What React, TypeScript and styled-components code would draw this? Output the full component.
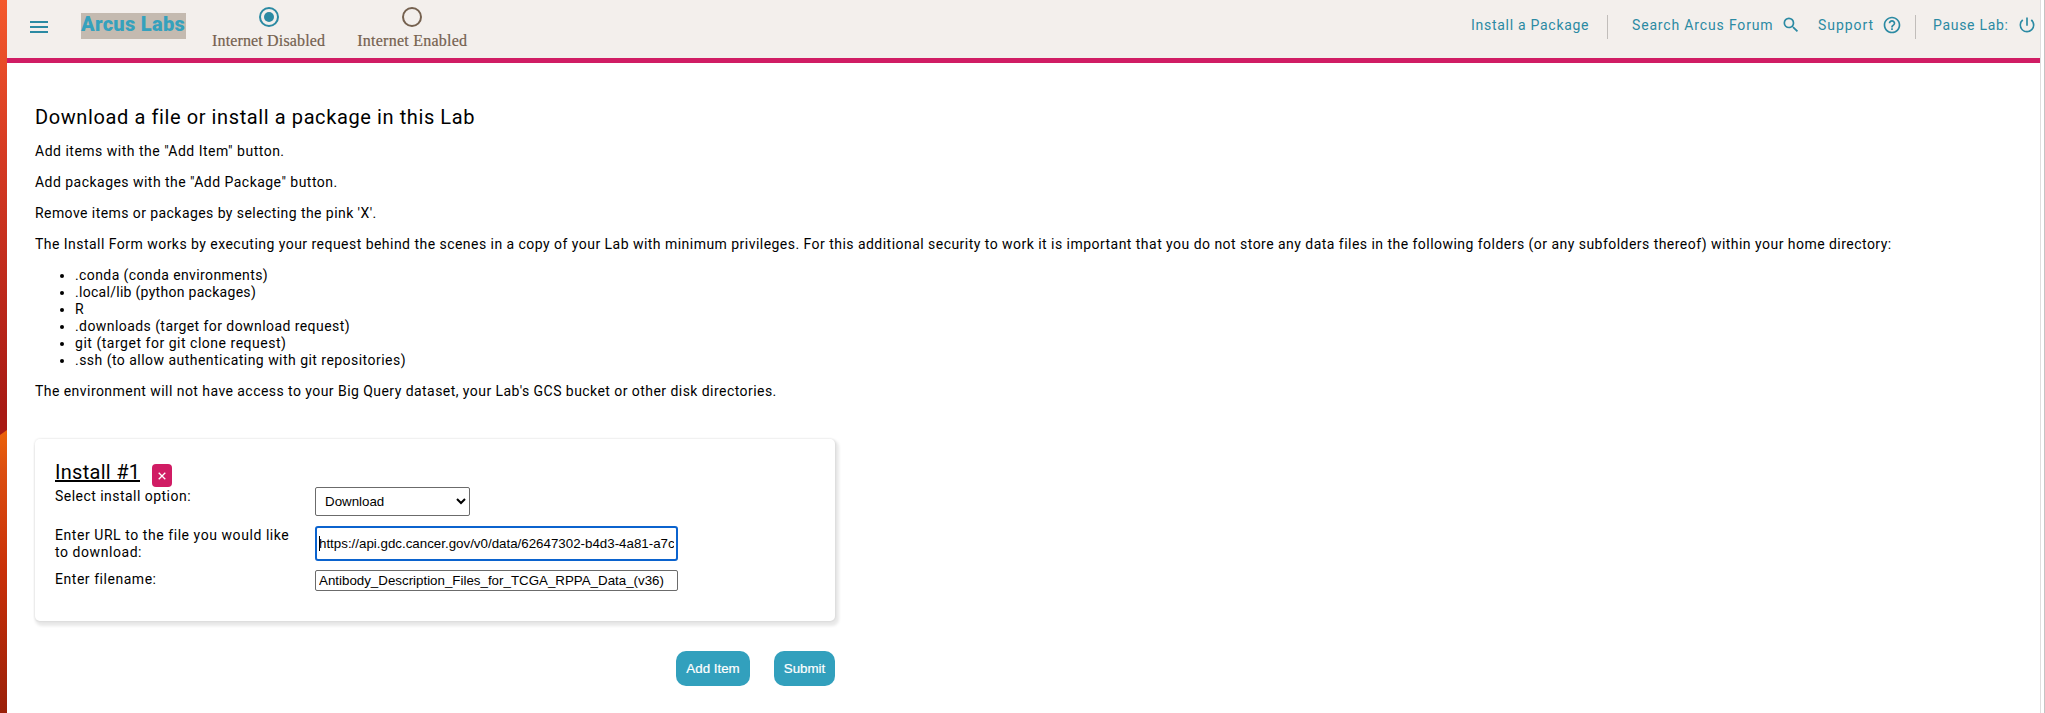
import React from 'react';
import styled, { createGlobalStyle } from 'styled-components';
import { MdHelpOutline, MdPowerSettingsNew, MdSearch } from 'react-icons/md';

const teal = '#2b8aa3';
const pink = '#d01c64';

const GlobalStyle = createGlobalStyle`
  * { box-sizing: border-box; }
  body {
    margin: 0;
    background: #fff;
    color: #000;
    font: 14px/17px Roboto, sans-serif;
  }
`;

const Screen = styled.div`
  display: flex;
  height: 713px;
  overflow: hidden;
`;

const Wallpaper = styled.div`
  flex: 0 0 7px;
  padding-top: 430px;
  background: linear-gradient(180deg, #f4592c 0, #d63b23 150px, #a81a14 410px, #a81a14 440px);
  &::after {
    content: '';
    display: block;
    height: 283px;
    background: linear-gradient(180deg, #ec6208 0, #dc4f10 40px, #c93008 140px, #9a2009 283px);
    clip-path: polygon(0 5px, 100% 0, 100% 100%, 0 100%);
  }
`;

const Page = styled.div`
  flex: 1;
  min-width: 0;
`;

const Gutter = styled.div`
  flex: 0 0 5px;
  background: #fff;
  border-left: 1px solid #dedede;
  border-right: 1px solid #c4c4c4;
`;

const Header = styled.header`
  display: flex;
  height: 63px;
  padding-left: 23px;
  background: #f3efec;
  border-bottom: 5px solid ${pink};
`;

const MenuButton = styled.div`
  display: flex;
  flex-direction: column;
  gap: 3px;
  width: 18px;
  margin: 21px 33px 0 0;
`;

const MenuBar = styled.span`
  height: 2px;
  background: ${teal};
`;

const Logo = styled.div`
  width: 105px;
  height: 26px;
  margin: 13px 26px 0 0;
  background: #c4bab0;
  color: #35a1bd;
  font-size: 20px;
  font-weight: 900;
  line-height: 22px;
  letter-spacing: 0.31px;
  white-space: nowrap;
`;

const RadioOption = styled.div<{ $gap?: number }>`
  display: flex;
  flex-direction: column;
  align-items: center;
  padding-top: 7px;
  margin-right: ${(p) => p.$gap ?? 0}px;
`;

const RadioDot = styled.span<{ $on?: boolean }>`
  display: grid;
  place-items: center;
  width: 20px;
  height: 20px;
  border: 2px solid ${(p) => (p.$on ? teal : '#75614f')};
  border-radius: 50%;
  &::after {
    content: '';
    width: 10px;
    height: 10px;
    border-radius: 50%;
    background: ${(p) => (p.$on ? teal : 'transparent')};
  }
`;

const RadioLabel = styled.span<{ $spacing: number }>`
  margin-top: 5px;
  color: #75614f;
  font: 16px/18px 'Liberation Serif', serif;
  -webkit-text-stroke: 0.2px #75614f;
  letter-spacing: ${(p) => p.$spacing}px;
  white-space: nowrap;
`;

const Nav = styled.nav`
  display: flex;
  margin: 15px 3px 0 auto;
  color: ${teal};
`;

const NavLink = styled.a<{ $w: number; $spacing: number }>`
  width: ${(p) => p.$w}px;
  padding-top: 2px;
  letter-spacing: ${(p) => p.$spacing}px;
  white-space: nowrap;
`;

const NavIcon = styled.span<{ $gap?: number }>`
  width: 20px;
  height: 20px;
  margin-right: ${(p) => p.$gap ?? 0}px;
  svg { display: block; }
`;

const Divider = styled.span<{ $gap: number }>`
  width: 1px;
  height: 24px;
  margin-right: ${(p) => p.$gap}px;
  background: #c1bdba;
`;

const Main = styled.main`
  padding: 42px 28px 0;
`;

const Title = styled.h1`
  margin: 0 0 14px;
  font-size: 20px;
  font-weight: 400;
  line-height: 24px;
  letter-spacing: 0.6px;
`;

const Text = styled.p<{ $spacing: number }>`
  margin: 0 0 14px;
  letter-spacing: ${(p) => p.$spacing}px;
  white-space: nowrap;
`;

const Folders = styled.ul`
  margin: 0 0 14px;
  padding-left: 40px;
`;

const Folder = styled.li<{ $spacing: number }>`
  letter-spacing: ${(p) => p.$spacing}px;
`;

const Card = styled.section`
  width: 800px;
  height: 182px;
  margin-top: 39px;
  padding: 24px 20px 0;
  border-radius: 5px;
  box-shadow:
    2px 3px 3px 2px rgba(0, 0, 0, 0.09),
    0 0 2px 1px rgba(0, 0, 0, 0.06);
`;

const CardHead = styled.div`
  display: flex;
  height: 24px;
`;

const CardTitle = styled.h2`
  margin: -5px 12px 0 0;
  width: 85px;
  height: 24px;
  padding-top: 2px;
  border-bottom: 2px solid #000;
  font-size: 20px;
  font-weight: 400;
  line-height: 24px;
  letter-spacing: 0.28px;
  white-space: nowrap;
`;

const RemoveButton = styled.button`
  display: grid;
  place-items: center;
  width: 20px;
  height: 23px;
  margin-top: 1px;
  padding: 0;
  border: 0;
  border-radius: 4px;
  background: ${pink};
`;

const Row = styled.div<{ $h: number }>`
  display: grid;
  grid-template-columns: 260px 363px;
  height: ${(p) => p.$h}px;
  margin-bottom: 10px;
`;

const Label = styled.label<{ $spacing: number }>`
  padding: 1px 18px 0 0;
  letter-spacing: ${(p) => p.$spacing}px;
`;

const Select = styled.select`
  width: 155px;
  padding: 0 5px;
  border: 1px solid #6b6b6b;
  border-radius: 2px;
  background-color: #fff;
  color: #000;
  font: 13.333px 'Liberation Sans', sans-serif;
`;

const Field = styled.div`
  position: relative;
  display: flex;
`;

const Input = styled.input<{ $active?: boolean }>`
  flex: 1;
  min-width: 0;
  padding: ${(p) => (p.$active ? '0 2px' : '0 3px')};
  border: ${(p) => (p.$active ? '2px solid #0b63ce' : '1px solid #6b6b6b')};
  border-radius: ${(p) => (p.$active ? 3 : 2)}px;
  background: #fff;
  color: #000;
  font: 13.333px 'Liberation Sans', sans-serif;
  outline: 0;
`;

const Caret = styled.span`
  position: absolute;
  left: 4px;
  top: 10px;
  width: 1px;
  height: 15px;
  background: #000;
`;

const Actions = styled.div`
  display: flex;
  justify-content: flex-end;
  gap: 24px;
  width: 800px;
  margin-top: 30px;
`;

const ActionButton = styled.button<{ $w: number }>`
  width: ${(p) => p.$w}px;
  height: 35px;
  padding: 0;
  border: 0;
  border-radius: 10px;
  background: #32a0bd;
  color: #fff;
  font: 13.333px 'Liberation Sans', sans-serif;
  -webkit-text-stroke: 0.2px #fff;
`;

const folders: [string, number][] = [
  ['.conda (conda environments)', 0.4],
  ['.local/lib (python packages)', 0.29],
  ['R', 0.4],
  ['.downloads (target for download request)', 0.43],
  ['git (target for git clone request)', 0.52],
  ['.ssh (to allow authenticating with git repositories)', 0.465],
];

export default function App() {
  return (
    <Screen>
      <GlobalStyle />
      <Wallpaper />
      <Page>
        <Header>
          <MenuButton>
            <MenuBar />
            <MenuBar />
            <MenuBar />
          </MenuButton>
          <Logo>Arcus Labs</Logo>
          <RadioOption $gap={32}>
            <RadioDot $on />
            <RadioLabel $spacing={0.15}>Internet Disabled</RadioLabel>
          </RadioOption>
          <RadioOption>
            <RadioDot />
            <RadioLabel $spacing={0.25}>Internet Enabled</RadioLabel>
          </RadioOption>
          <Nav>
            <NavLink $w={136} $spacing={0.72}>Install a Package</NavLink>
            <Divider $gap={24} />
            <NavLink $w={149} $spacing={0.84}>Search Arcus Forum</NavLink>
            <NavIcon $gap={17}><MdSearch size={20} /></NavIcon>
            <NavLink $w={64} $spacing={0.94}>Support</NavLink>
            <NavIcon $gap={13}><MdHelpOutline size={20} /></NavIcon>
            <Divider $gap={17} />
            <NavLink $w={84} $spacing={0.7}>Pause Lab:</NavLink>
            <NavIcon><MdPowerSettingsNew size={20} /></NavIcon>
          </Nav>
        </Header>
        <Main>
          <Title>Download a file or install a package in this Lab</Title>
          <Text $spacing={0.5}>Add items with the "Add Item" button.</Text>
          <Text $spacing={0.47}>Add packages with the "Add Package" button.</Text>
          <Text $spacing={0.43}>Remove items or packages by selecting the pink 'X'.</Text>
          <Text $spacing={0.466}>
            The Install Form works by executing your request behind the scenes in a copy of your Lab with
            minimum privileges. For this additional security to work it is important that you do not store
            any data files in the following folders (or any subfolders thereof) within your home directory:
          </Text>
          <Folders>
            {folders.map(([name, spacing]) => (
              <Folder key={name} $spacing={spacing}>{name}</Folder>
            ))}
          </Folders>
          <Text $spacing={0.447}>
            The environment will not have access to your Big Query dataset, your Lab's GCS bucket or other
            disk directories.
          </Text>
          <Card>
            <CardHead>
              <CardTitle>Install #1</CardTitle>
              <RemoveButton aria-label="Remove">
                <svg width="8" height="8" viewBox="0 0 8 8" stroke="#fff" strokeWidth="1.3">
                  <path d="M0.7 0.7 7.3 7.3M7.3 0.7 0.7 7.3" />
                </svg>
              </RemoveButton>
            </CardHead>
            <Row $h={29}>
              <Label $spacing={0.467}>Select install option:</Label>
              <Select defaultValue="Download">
                <option>Download</option>
              </Select>
            </Row>
            <Row $h={34}>
              <Label $spacing={0.56}>Enter URL to the file you would like to download:</Label>
              <Field>
                <Input $active readOnly value="https://api.gdc.cancer.gov/v0/data/62647302-b4d3-4a81-a7c" />
                <Caret />
              </Field>
            </Row>
            <Row $h={21}>
              <Label $spacing={0.538}>Enter filename:</Label>
              <Field>
                <Input readOnly value="Antibody_Description_Files_for_TCGA_RPPA_Data_(v36)" />
              </Field>
            </Row>
          </Card>
          <Actions>
            <ActionButton $w={74}>Add Item</ActionButton>
            <ActionButton $w={61}>Submit</ActionButton>
          </Actions>
        </Main>
      </Page>
      <Gutter />
    </Screen>
  );
}
